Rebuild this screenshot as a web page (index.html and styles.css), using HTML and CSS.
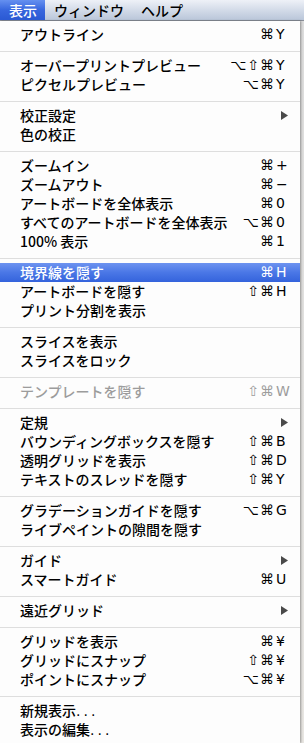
FILE: index.html
```html
<!DOCTYPE html>
<html lang="ja">
<head>
    <meta charset="UTF-8">
    <meta name="viewport" content="width=device-width, initial-scale=1.0">
    <title>表示メニュー</title>
    <link rel="stylesheet" href="styles.css">
</head>
<body>

<div class="menubar">
    <span class="menubar-item active">表示</span>
    <span class="menubar-item">ウィンドウ</span>
    <span class="menubar-item">ヘルプ</span>
</div>

<ul class="menu">
    <li class="item"><span class="label">アウトライン</span><span class="keys"><span class="mods">⌘</span><span class="key">Y</span></span></li>
    <li class="sep"></li>
    <li class="item"><span class="label">オーバープリントプレビュー</span><span class="keys"><span class="mods">⌥⇧⌘</span><span class="key">Y</span></span></li>
    <li class="item"><span class="label">ピクセルプレビュー</span><span class="keys"><span class="mods">⌥⌘</span><span class="key">Y</span></span></li>
    <li class="sep"></li>
    <li class="item"><span class="label">校正設定</span><svg class="arrow" width="7" height="9" viewBox="0 0 7 9"><polygon points="0,0 7,4.5 0,9"/></svg></li>
    <li class="item"><span class="label">色の校正</span></li>
    <li class="sep"></li>
    <li class="item"><span class="label">ズームイン</span><span class="keys"><span class="mods">⌘</span><span class="key">+</span></span></li>
    <li class="item"><span class="label">ズームアウト</span><span class="keys"><span class="mods">⌘</span><span class="key">−</span></span></li>
    <li class="item"><span class="label">アートボードを全体表示</span><span class="keys"><span class="mods">⌘</span><span class="key">0</span></span></li>
    <li class="item"><span class="label">すべてのアートボードを全体表示</span><span class="keys"><span class="mods">⌥⌘</span><span class="key">0</span></span></li>
    <li class="item"><span class="label">100% 表示</span><span class="keys"><span class="mods">⌘</span><span class="key">1</span></span></li>
    <li class="sep"></li>
    <li class="item selected"><span class="label">境界線を隠す</span><span class="keys"><span class="mods">⌘</span><span class="key">H</span></span></li>
    <li class="item"><span class="label">アートボードを隠す</span><span class="keys"><span class="mods">⇧⌘</span><span class="key">H</span></span></li>
    <li class="item"><span class="label">プリント分割を表示</span></li>
    <li class="sep"></li>
    <li class="item"><span class="label">スライスを表示</span></li>
    <li class="item"><span class="label">スライスをロック</span></li>
    <li class="sep"></li>
    <li class="item disabled"><span class="label">テンプレートを隠す</span><span class="keys"><span class="mods">⇧⌘</span><span class="key">W</span></span></li>
    <li class="sep"></li>
    <li class="item"><span class="label">定規</span><svg class="arrow" width="7" height="9" viewBox="0 0 7 9"><polygon points="0,0 7,4.5 0,9"/></svg></li>
    <li class="item"><span class="label">バウンディングボックスを隠す</span><span class="keys"><span class="mods">⇧⌘</span><span class="key">B</span></span></li>
    <li class="item"><span class="label">透明グリッドを表示</span><span class="keys"><span class="mods">⇧⌘</span><span class="key">D</span></span></li>
    <li class="item"><span class="label">テキストのスレッドを隠す</span><span class="keys"><span class="mods">⇧⌘</span><span class="key">Y</span></span></li>
    <li class="sep"></li>
    <li class="item"><span class="label">グラデーションガイドを隠す</span><span class="keys"><span class="mods">⌥⌘</span><span class="key">G</span></span></li>
    <li class="item"><span class="label">ライブペイントの隙間を隠す</span></li>
    <li class="sep"></li>
    <li class="item"><span class="label">ガイド</span><svg class="arrow" width="7" height="9" viewBox="0 0 7 9"><polygon points="0,0 7,4.5 0,9"/></svg></li>
    <li class="item"><span class="label">スマートガイド</span><span class="keys"><span class="mods">⌘</span><span class="key">U</span></span></li>
    <li class="sep"></li>
    <li class="item"><span class="label">遠近グリッド</span><svg class="arrow" width="7" height="9" viewBox="0 0 7 9"><polygon points="0,0 7,4.5 0,9"/></svg></li>
    <li class="sep"></li>
    <li class="item"><span class="label">グリッドを表示</span><span class="keys"><span class="mods">⌘</span><span class="key">¥</span></span></li>
    <li class="item"><span class="label">グリッドにスナップ</span><span class="keys"><span class="mods">⇧⌘</span><span class="key">¥</span></span></li>
    <li class="item"><span class="label">ポイントにスナップ</span><span class="keys"><span class="mods">⌥⌘</span><span class="key">¥</span></span></li>
    <li class="sep"></li>
    <li class="item"><span class="label">新規表示<span class="dots">...</span></span></li>
    <li class="item"><span class="label">表示の編集<span class="dots">...</span></span></li>
</ul>

</body>
</html>
```

FILE: styles.css
```css
body {
    margin: 0;
    width: 304px;
    height: 743px;
    overflow: hidden;
    background: linear-gradient(to bottom, #dcdcdc, #e8e6e2);
    font-family: "DejaVu Sans", "Noto Sans CJK JP", sans-serif;
    font-size: 14px;
    color: #000;
}

.menubar {
    display: flex;
    height: 20px;
    border-bottom: 1px solid #8a8f99;
    background: linear-gradient(to bottom, #eef1f7, #d3dbe8 50%, #bac6d9);
}

.menubar-item {
    padding: 0 8px 0 9px;
    line-height: 20px;
    font-family: "Noto Sans CJK JP", sans-serif;
    font-weight: 500;
}

.menubar-item.active {
    color: #fff;
    background: linear-gradient(to bottom, #6590f0, #3766de 50%, #2a59d3);
}

.menu {
    list-style: none;
    margin: 0;
    padding: 4px 0;
    width: 300px;
    background: #fdfdfd;
    box-shadow: 1px 0 2px rgba(0, 0, 0, 0.35);
}

.item {
    display: flex;
    justify-content: space-between;
    align-items: center;
    height: 19px;
    line-height: 19px;
    padding: 0 12px 0 20px;
    white-space: nowrap;
}

.label {
    font-family: "Noto Sans CJK JP", sans-serif;
    font-weight: 500;
}

.label .dots {
    font-family: "DejaVu Sans", sans-serif;
    font-weight: normal;
    letter-spacing: 3px;
}

.keys {
    display: flex;
}

.mods {
    margin-right: 1px;
    letter-spacing: 1px;
}

.key {
    width: 12px;
}

.arrow {
    fill: #4a4a4a;
}

.item.selected {
    color: #fff;
    background: linear-gradient(to bottom, #6d93f0, #4a77e6 50%, #3463dc);
}

.item.disabled {
    color: #9c9c9c;
}

.sep {
    height: 1px;
    margin: 7px 0 4px;
    background: #dedede;
}
```
